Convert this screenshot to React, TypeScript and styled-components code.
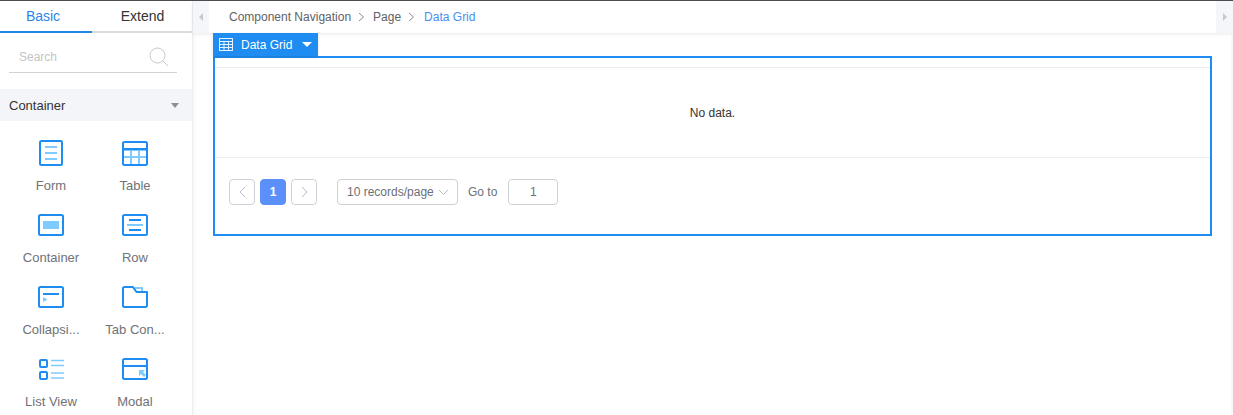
import React from 'react'
import styled, { createGlobalStyle } from 'styled-components'

const GlobalStyle = createGlobalStyle`
  html, body { margin:0; padding:0; background:#fff; }
  body { font-family:"Liberation Sans", Arial, sans-serif; overflow:hidden; }
`

const Page = styled.div`
  display:flex;
  width:1233px;
  height:415px;
  border-top:1px solid #4a4d50;
  box-sizing:border-box;
  overflow:hidden;
`
const Sidebar = styled.aside`
  width:192px;
  flex:none;
  border-right:1px solid #eeeeee;
  box-shadow:1px 0 3px rgba(0,0,0,.05);
  box-sizing:content-box;
  display:flex;
  flex-direction:column;
  overflow:hidden;
`
const Tabs = styled.div`
  display:flex;
  height:32px;
  flex:none;
`
const Tab = styled.div<{ $active?: boolean }>`
  width:${(p) => (p.$active ? '92px' : '101px')};
  padding-right:${(p) => (p.$active ? '6px' : '0')};
  flex:none;
  text-align:center;
  font-size:14px;
  line-height:31px;
  box-sizing:border-box;
  color:${(p) => (p.$active ? '#2a86e8' : '#333')};
  border-bottom:2px solid ${(p) => (p.$active ? '#1e88e5' : '#dcdcdc')};
`
const SearchRow = styled.div`
  display:flex;
  flex:none;
  align-items:center;
  justify-content:space-between;
  height:40px;
  box-sizing:border-box;
  margin:0 15px 0 9px;
  padding:8px 8px 0 10px;
  border-bottom:1px solid #d2d2d2;
`
const SearchText = styled.span`
  font-size:12px;
  color:#c4c4c4;
`
const Category = styled.div`
  display:flex;
  align-items:center;
  justify-content:space-between;
  height:32px;
  margin-top:16px;
  padding:0 13px 0 9px;
  background:#f4f5f9;
  font-size:13px;
  color:#333;
  flex:none;
`
const Caret = styled.span`
  width:0;
  height:0;
  border-left:4px solid transparent;
  border-right:4px solid transparent;
  border-top:5px solid #8f8f8f;
`
const Widgets = styled.div`
  display:grid;
  flex:none;
  grid-template-columns:88px 80px;
  grid-auto-rows:72px;
  padding:18px 0 0 7px;
`
const Widget = styled.div`
  display:flex;
  flex-direction:column;
  align-items:center;
`
const WidgetIcon = styled.div`
  height:28px;
  display:flex;
  align-items:center;
  justify-content:center;
`
const WidgetLabel = styled.span`
  margin-top:12px;
  font-size:13px;
  line-height:14px;
  color:#6f7277;
  white-space:nowrap;
`
const Main = styled.main`
  flex:1;
  min-width:0;
  display:flex;
  flex-direction:column;
`
const TopBar = styled.div`
  display:flex;
  height:32px;
  flex:none;
  align-items:stretch;
  box-shadow:0 1px 4px rgba(0,0,0,.09);
  position:relative;
`
const Collapse = styled.div<{ $wide?: boolean }>`
  width:${(p) => (p.$wide ? '17px' : '16px')};
  background:#f5f6f9;
  display:flex;
  align-items:center;
  justify-content:center;
  flex:none;
`
const TriangleLeft = styled.span`
  border-top:4px solid transparent;
  border-bottom:4px solid transparent;
  border-right:4px solid #c6c8cc;
`
const TriangleRight = styled.span`
  border-top:4px solid transparent;
  border-bottom:4px solid transparent;
  border-left:4px solid #c6c8cc;
`
const Crumbs = styled.nav`
  flex:1;
  display:flex;
  align-items:center;
  padding-left:20px;
  font-size:12px;
  color:#606266;
`
const CrumbCurrent = styled.span`
  margin-left:1px;
  color:#4a90f0;
`
const CrumbSep = styled.svg`
  width:7px;
  height:10px;
  margin:0 8px 0 7px;
  display:block;
`
const Canvas = styled.div`
  flex:1;
  padding:0 19px 0 20px;
  border-right:2px solid #f8f8fa;
`
const Tag = styled.div`
  width:105px;
  height:23px;
  background:#1e8cf0;
  color:#fff;
  display:flex;
  align-items:center;
  font-size:12px;
  box-sizing:border-box;
  padding-left:6px;
  box-shadow:0 1px 3px rgba(0,0,0,.12);
  position:relative;
`
const TagText = styled.span`
  margin-left:8px;
`
const TagCaret = styled.span`
  margin-left:10px;
  border-left:5px solid transparent;
  border-right:5px solid transparent;
  border-top:5px solid #fff;
`
const Frame = styled.section`
  border:2px solid #1e8cf0;
  height:180px;
  box-sizing:border-box;
  padding-top:9px;
`
const EmptyRow = styled.div`
  height:91px;
  box-sizing:border-box;
  border-top:1px solid #ebebeb;
  border-bottom:1px solid #ebeef2;
  display:flex;
  align-items:center;
  justify-content:center;
  font-size:12px;
  color:#333;
`
const Pager = styled.div`
  display:flex;
  align-items:center;
  padding:21px 0 0 14px;
  font-size:12px;
  color:#606266;
`
const PageBtn = styled.div<{ $active?: boolean }>`
  width:26px;
  height:26px;
  box-sizing:border-box;
  border-radius:4px;
  margin-right:5px;
  display:flex;
  align-items:center;
  justify-content:center;
  border:1px solid ${(p) => (p.$active ? '#5b8ff9' : '#ccd0d7')};
  background:${(p) => (p.$active ? '#5b8ff9' : '#fff')};
  color:#fff;
  font-weight:bold;
`
const SizeSelect = styled.div`
  width:121px;
  height:26px;
  box-sizing:border-box;
  margin-left:15px;
  border:1px solid #ccd0d7;
  border-radius:4px;
  display:flex;
  align-items:center;
  justify-content:space-between;
  padding:0 8px 0 9px;
  color:#6b7078;
`
const GoLabel = styled.span`
  margin-left:10px;
  color:#6b7078;
`
const GoInput = styled.div`
  width:50px;
  height:26px;
  box-sizing:border-box;
  margin-left:11px;
  border:1px solid #ccd0d7;
  border-radius:4px;
  display:flex;
  align-items:center;
  justify-content:center;
  color:#6b7078;
`

const BLUE = '#1e8cf0'
const LIGHT = '#7fcbff'

const Chevron = ({ dir }: { dir: 'left' | 'right' | 'down' }) => {
  if (dir === 'down') {
    return (
      <svg width="11" height="7" viewBox="0 0 11 7" fill="none" stroke="#b8bcc4" strokeWidth="1">
        <path d="M1 1l4.500 4.500L10 1" />
      </svg>
    )
  }
  return (
    <svg width="7" height="12" viewBox="0 0 7 12" fill="none" stroke="#b8bcc4" strokeWidth="1">
      <path d={dir === 'left' ? 'M6 1L1 6l5 5' : 'M1 1l5 5-5 5'} />
    </svg>
  )
}

const FormIcon = () => (
  <svg width="26" height="28" viewBox="0 0 26 28" fill="none">
    <rect x="2" y="2" width="22" height="24" rx="1.5" stroke={BLUE} strokeWidth="2" />
    <path d="M7 8h12M7 14h12M7 20h12" stroke={LIGHT} strokeWidth="2" />
  </svg>
)
const TableIcon = () => (
  <svg width="26" height="26" viewBox="0 0 26 26" fill="none">
    <path d="M2 17h22M9 10v14M17 10v14" stroke={LIGHT} strokeWidth="2" />
    <path d="M2 10.500h22" stroke={LIGHT} strokeWidth="1" />
    <path d="M2 9h22" stroke={BLUE} strokeWidth="2" />
    <rect x="1" y="2" width="24" height="23" rx="1.5" stroke={BLUE} strokeWidth="2" />
  </svg>
)
const ContainerIcon = () => (
  <svg width="26" height="22" viewBox="0 0 26 22" fill="none">
    <rect x="1" y="1" width="24" height="20" rx="1.5" stroke={BLUE} strokeWidth="2" />
    <rect x="5" y="7" width="16" height="8" fill={LIGHT} />
  </svg>
)
const RowIcon = () => (
  <svg width="26" height="22" viewBox="0 0 26 22" fill="none">
    <rect x="1" y="1" width="24" height="20" rx="1.5" stroke={BLUE} strokeWidth="2" />
    <path d="M7 6h12M7 16h12" stroke={BLUE} strokeWidth="2" />
    <path d="M5 11h16" stroke={LIGHT} strokeWidth="2" />
  </svg>
)
const CollapseIcon = () => (
  <svg width="26" height="22" viewBox="0 0 26 22" fill="none">
    <rect x="1" y="1" width="24" height="20" rx="1.5" stroke={BLUE} strokeWidth="2" />
    <path d="M5 8h16" stroke={BLUE} strokeWidth="2" />
    <path d="M5 11l4.500 2.500L5 16z" fill={LIGHT} />
  </svg>
)
const TabIcon = () => (
  <svg width="26" height="22" viewBox="0 0 26 22" fill="none">
    <path d="M11 1H2.5A1.5 1.5 0 0 0 1 2.500V19.500A1.500 1.500 0 0 0 2.500 21h21A1.500 1.500 0 0 0 25 19.500V6H14.500z" stroke={BLUE} strokeWidth="2" strokeLinejoin="round" />
    <path d="M13 2h7v3" stroke={LIGHT} strokeWidth="2" />
  </svg>
)
const ListIcon = () => (
  <svg width="26" height="22" viewBox="0 0 26 22" fill="none">
    <rect x="2" y="2" width="7" height="7" rx="1" stroke={BLUE} strokeWidth="2" />
    <rect x="2" y="14" width="7" height="7" rx="1" stroke={BLUE} strokeWidth="2" />
    <path d="M13 2.500h13M13 7.500h13M13 15h13M13 20h13" stroke={LIGHT} strokeWidth="1.500" />
  </svg>
)
const ModalIcon = () => (
  <svg width="26" height="22" viewBox="0 0 26 22" fill="none">
    <rect x="1" y="1" width="24" height="20" rx="1.500" stroke={BLUE} strokeWidth="2" />
    <path d="M1 8h24" stroke={BLUE} strokeWidth="2" />
    <path d="M17 12h6l-2 2 3 3-2 2-3-3-2 2z" fill={LIGHT} />
  </svg>
)

const widgets: { label: string; icon: React.ReactNode }[] = [
  { label: 'Form', icon: <FormIcon /> },
  { label: 'Table', icon: <TableIcon /> },
  { label: 'Container', icon: <ContainerIcon /> },
  { label: 'Row', icon: <RowIcon /> },
  { label: 'Collapsi...', icon: <CollapseIcon /> },
  { label: 'Tab Con...', icon: <TabIcon /> },
  { label: 'List View', icon: <ListIcon /> },
  { label: 'Modal', icon: <ModalIcon /> },
]

export default function App() {
  return (
    <>
      <GlobalStyle />
      <Page>
        <Sidebar>
          <Tabs>
            <Tab $active>Basic</Tab>
            <Tab>Extend</Tab>
          </Tabs>
          <SearchRow>
            <SearchText>Search</SearchText>
            <svg width="20" height="20" viewBox="0 0 20 20" fill="none" stroke="#c8c8c8" strokeWidth="1">
              <circle cx="8.500" cy="8.500" r="7.500" />
              <path d="M14 14l5 5" />
            </svg>
          </SearchRow>
          <Category>
            Container
            <Caret />
          </Category>
          <Widgets>
            {widgets.map((w) => (
              <Widget key={w.label}>
                <WidgetIcon>{w.icon}</WidgetIcon>
                <WidgetLabel>{w.label}</WidgetLabel>
              </Widget>
            ))}
          </Widgets>
        </Sidebar>
        <Main>
          <TopBar>
            <Collapse>
              <TriangleLeft />
            </Collapse>
            <Crumbs>
              Component Navigation
              <CrumbSep viewBox="0 0 7 10" fill="none" stroke="#8a8d92" strokeWidth="1">
                <path d="M1 1l4.500 4-4.500 4" />
              </CrumbSep>
              Page
              <CrumbSep viewBox="0 0 7 10" fill="none" stroke="#8a8d92" strokeWidth="1">
                <path d="M1 1l4.500 4-4.500 4" />
              </CrumbSep>
              <CrumbCurrent>Data Grid</CrumbCurrent>
            </Crumbs>
            <Collapse $wide>
              <TriangleRight />
            </Collapse>
          </TopBar>
          <Canvas>
            <Tag>
              <svg width="14" height="13" viewBox="0 0 14 13" fill="none" stroke="#e6f3ff" strokeWidth="1">
                <rect x=".5" y=".5" width="13" height="12" />
                <path d="M.5 3.500h13M.5 6.500h13M.5 9.500h13M5 3.500v9M9.500 3.500v9" />
              </svg>
              <TagText>Data Grid</TagText>
              <TagCaret />
            </Tag>
            <Frame>
              <EmptyRow>No data.</EmptyRow>
              <Pager>
                <PageBtn>
                  <Chevron dir="left" />
                </PageBtn>
                <PageBtn $active>1</PageBtn>
                <PageBtn>
                  <Chevron dir="right" />
                </PageBtn>
                <SizeSelect>
                  10 records/page
                  <Chevron dir="down" />
                </SizeSelect>
                <GoLabel>Go to</GoLabel>
                <GoInput>1</GoInput>
              </Pager>
            </Frame>
          </Canvas>
        </Main>
      </Page>
    </>
  )
}
